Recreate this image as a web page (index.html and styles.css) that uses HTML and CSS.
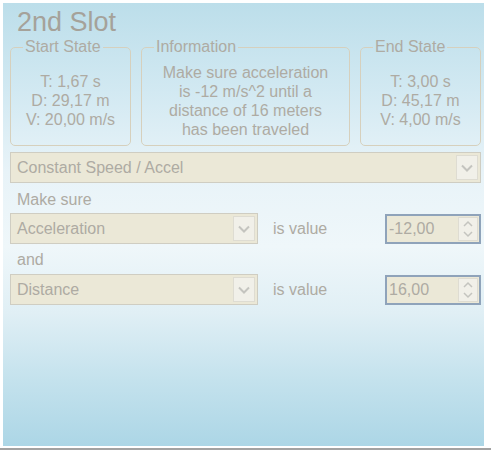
FILE: index.html
```html
<!DOCTYPE html>
<html lang="en">
<head>
    <meta charset="UTF-8">
    <meta name="viewport" content="width=device-width, initial-scale=1.0">
    <title>2nd Slot</title>
    <link rel="stylesheet" href="styles.css">
</head>
<body>
    <div class="panel">
        <h1 class="title">2nd Slot</h1>

        <div class="states">
            <fieldset class="group group-side">
                <legend>Start State</legend>
                <p>T: 1,67 s<br>D: 29,17 m<br>V: 20,00 m/s</p>
            </fieldset>
            <fieldset class="group group-info">
                <legend>Information</legend>
                <p>Make sure acceleration<br>is -12 m/s^2 until a<br>distance of 16 meters<br>has been traveled</p>
            </fieldset>
            <fieldset class="group group-side">
                <legend>End State</legend>
                <p>T: 3,00 s<br>D: 45,17 m<br>V: 4,00 m/s</p>
            </fieldset>
        </div>

        <div class="combo combo-wide">
            <span class="combo-text">Constant Speed / Accel</span>
            <span class="drop">
                <svg width="12" height="8" viewBox="0 0 12 8"><polyline points="1,1.5 6,6.5 11,1.5" fill="none" stroke="#c4c4bf" stroke-width="2"/></svg>
            </span>
        </div>

        <div class="caption caption-first">Make sure</div>
        <div class="row">
            <div class="combo combo-half">
                <span class="combo-text">Acceleration</span>
                <span class="drop">
                    <svg width="12" height="8" viewBox="0 0 12 8"><polyline points="1,1.5 6,6.5 11,1.5" fill="none" stroke="#c4c4bf" stroke-width="2"/></svg>
                </span>
            </div>
            <span class="is-value">is value</span>
            <div class="spin">
                <span class="spin-text">-12,00</span>
                <span class="spin-buttons">
                    <svg width="10" height="18" viewBox="0 0 10 18"><polyline points="1,6 5,2 9,6" fill="none" stroke="#c4c4bf" stroke-width="1.5"/><polyline points="1,12 5,16 9,12" fill="none" stroke="#c4c4bf" stroke-width="1.5"/></svg>
                </span>
            </div>
        </div>

        <div class="caption">and</div>
        <div class="row">
            <div class="combo combo-half">
                <span class="combo-text">Distance</span>
                <span class="drop">
                    <svg width="12" height="8" viewBox="0 0 12 8"><polyline points="1,1.5 6,6.5 11,1.5" fill="none" stroke="#c4c4bf" stroke-width="2"/></svg>
                </span>
            </div>
            <span class="is-value">is value</span>
            <div class="spin">
                <span class="spin-text">16,00</span>
                <span class="spin-buttons">
                    <svg width="10" height="18" viewBox="0 0 10 18"><polyline points="1,6 5,2 9,6" fill="none" stroke="#c4c4bf" stroke-width="1.5"/><polyline points="1,12 5,16 9,12" fill="none" stroke="#c4c4bf" stroke-width="1.5"/></svg>
                </span>
            </div>
        </div>
    </div>
    <div class="bottom-line"></div>
</body>
</html>
```

FILE: styles.css
```css
body {
    font-family: 'Liberation Sans', Arial, sans-serif;
    font-size: 16px;
    background-color: #fff;
    margin: 0;
    color: #aeaba3;
}

.panel {
    width: 481px;
    height: 443px;
    margin: 3px 0 0 3px;
    padding: 0 3px 0 7px;
    box-sizing: border-box;
    background: linear-gradient(to bottom, #bcdeea 0%, #d2e9f2 20%, #e8f3f8 38%, #eff7fa 55%, #e0eff5 70%, #c4e2ed 85%, #acd6e6 100%);
}

.title {
    margin: 0;
    padding: 5px 0 0 7px;
    height: 35px;
    box-sizing: border-box;
    font-size: 27px;
    font-weight: normal;
    line-height: 28px;
    color: #a5a29a;
}

.states {
    display: flex;
    gap: 10px;
}

.group {
    margin: 0;
    padding: 0;
    height: 108px;
    box-sizing: border-box;
    border: 1px solid #d6d0bd;
    border-radius: 5px;
    display: flex;
    align-items: center;
    justify-content: center;
}

.group legend {
    margin-left: 12px;
    padding: 0 2px;
    line-height: 18px;
}

.group p {
    margin: 0;
    text-align: center;
    line-height: 19px;
}

.group-side {
    width: 121px;
}

.group-info {
    width: 209px;
}

.combo {
    display: flex;
    align-items: center;
    justify-content: space-between;
    height: 31px;
    box-sizing: border-box;
    border: 1px solid #cfcdc2;
    background-color: #ebe8d7;
    padding: 0 2px 0 6px;
}

.combo-wide {
    margin-top: 6px;
    width: 471px;
}

.combo-half {
    width: 248px;
}

.drop {
    width: 22px;
    height: 25px;
    box-sizing: border-box;
    border: 1px solid #dedcd2;
    background-color: #f1f0e9;
    display: flex;
    align-items: center;
    justify-content: center;
}

.caption {
    padding-left: 7px;
    height: 30px;
    line-height: 31px;
}

.caption-first {
    line-height: 33px;
}

.row {
    display: flex;
    align-items: center;
}

.is-value {
    margin-left: 15px;
    width: 112px;
}

.spin {
    display: flex;
    align-items: center;
    justify-content: space-between;
    width: 96px;
    height: 30px;
    box-sizing: border-box;
    border: 2px solid #8fa3ba;
    background-color: #ebe8d7;
    padding: 0 1px 0 2px;
}

.spin-buttons {
    width: 20px;
    height: 24px;
    box-sizing: border-box;
    border: 1px solid #dedcd2;
    background-color: #f1f0e9;
    display: flex;
    align-items: center;
    justify-content: center;
}

.bottom-line {
    margin-top: 2px;
    height: 2px;
    background-color: #a2a2a2;
}
```
